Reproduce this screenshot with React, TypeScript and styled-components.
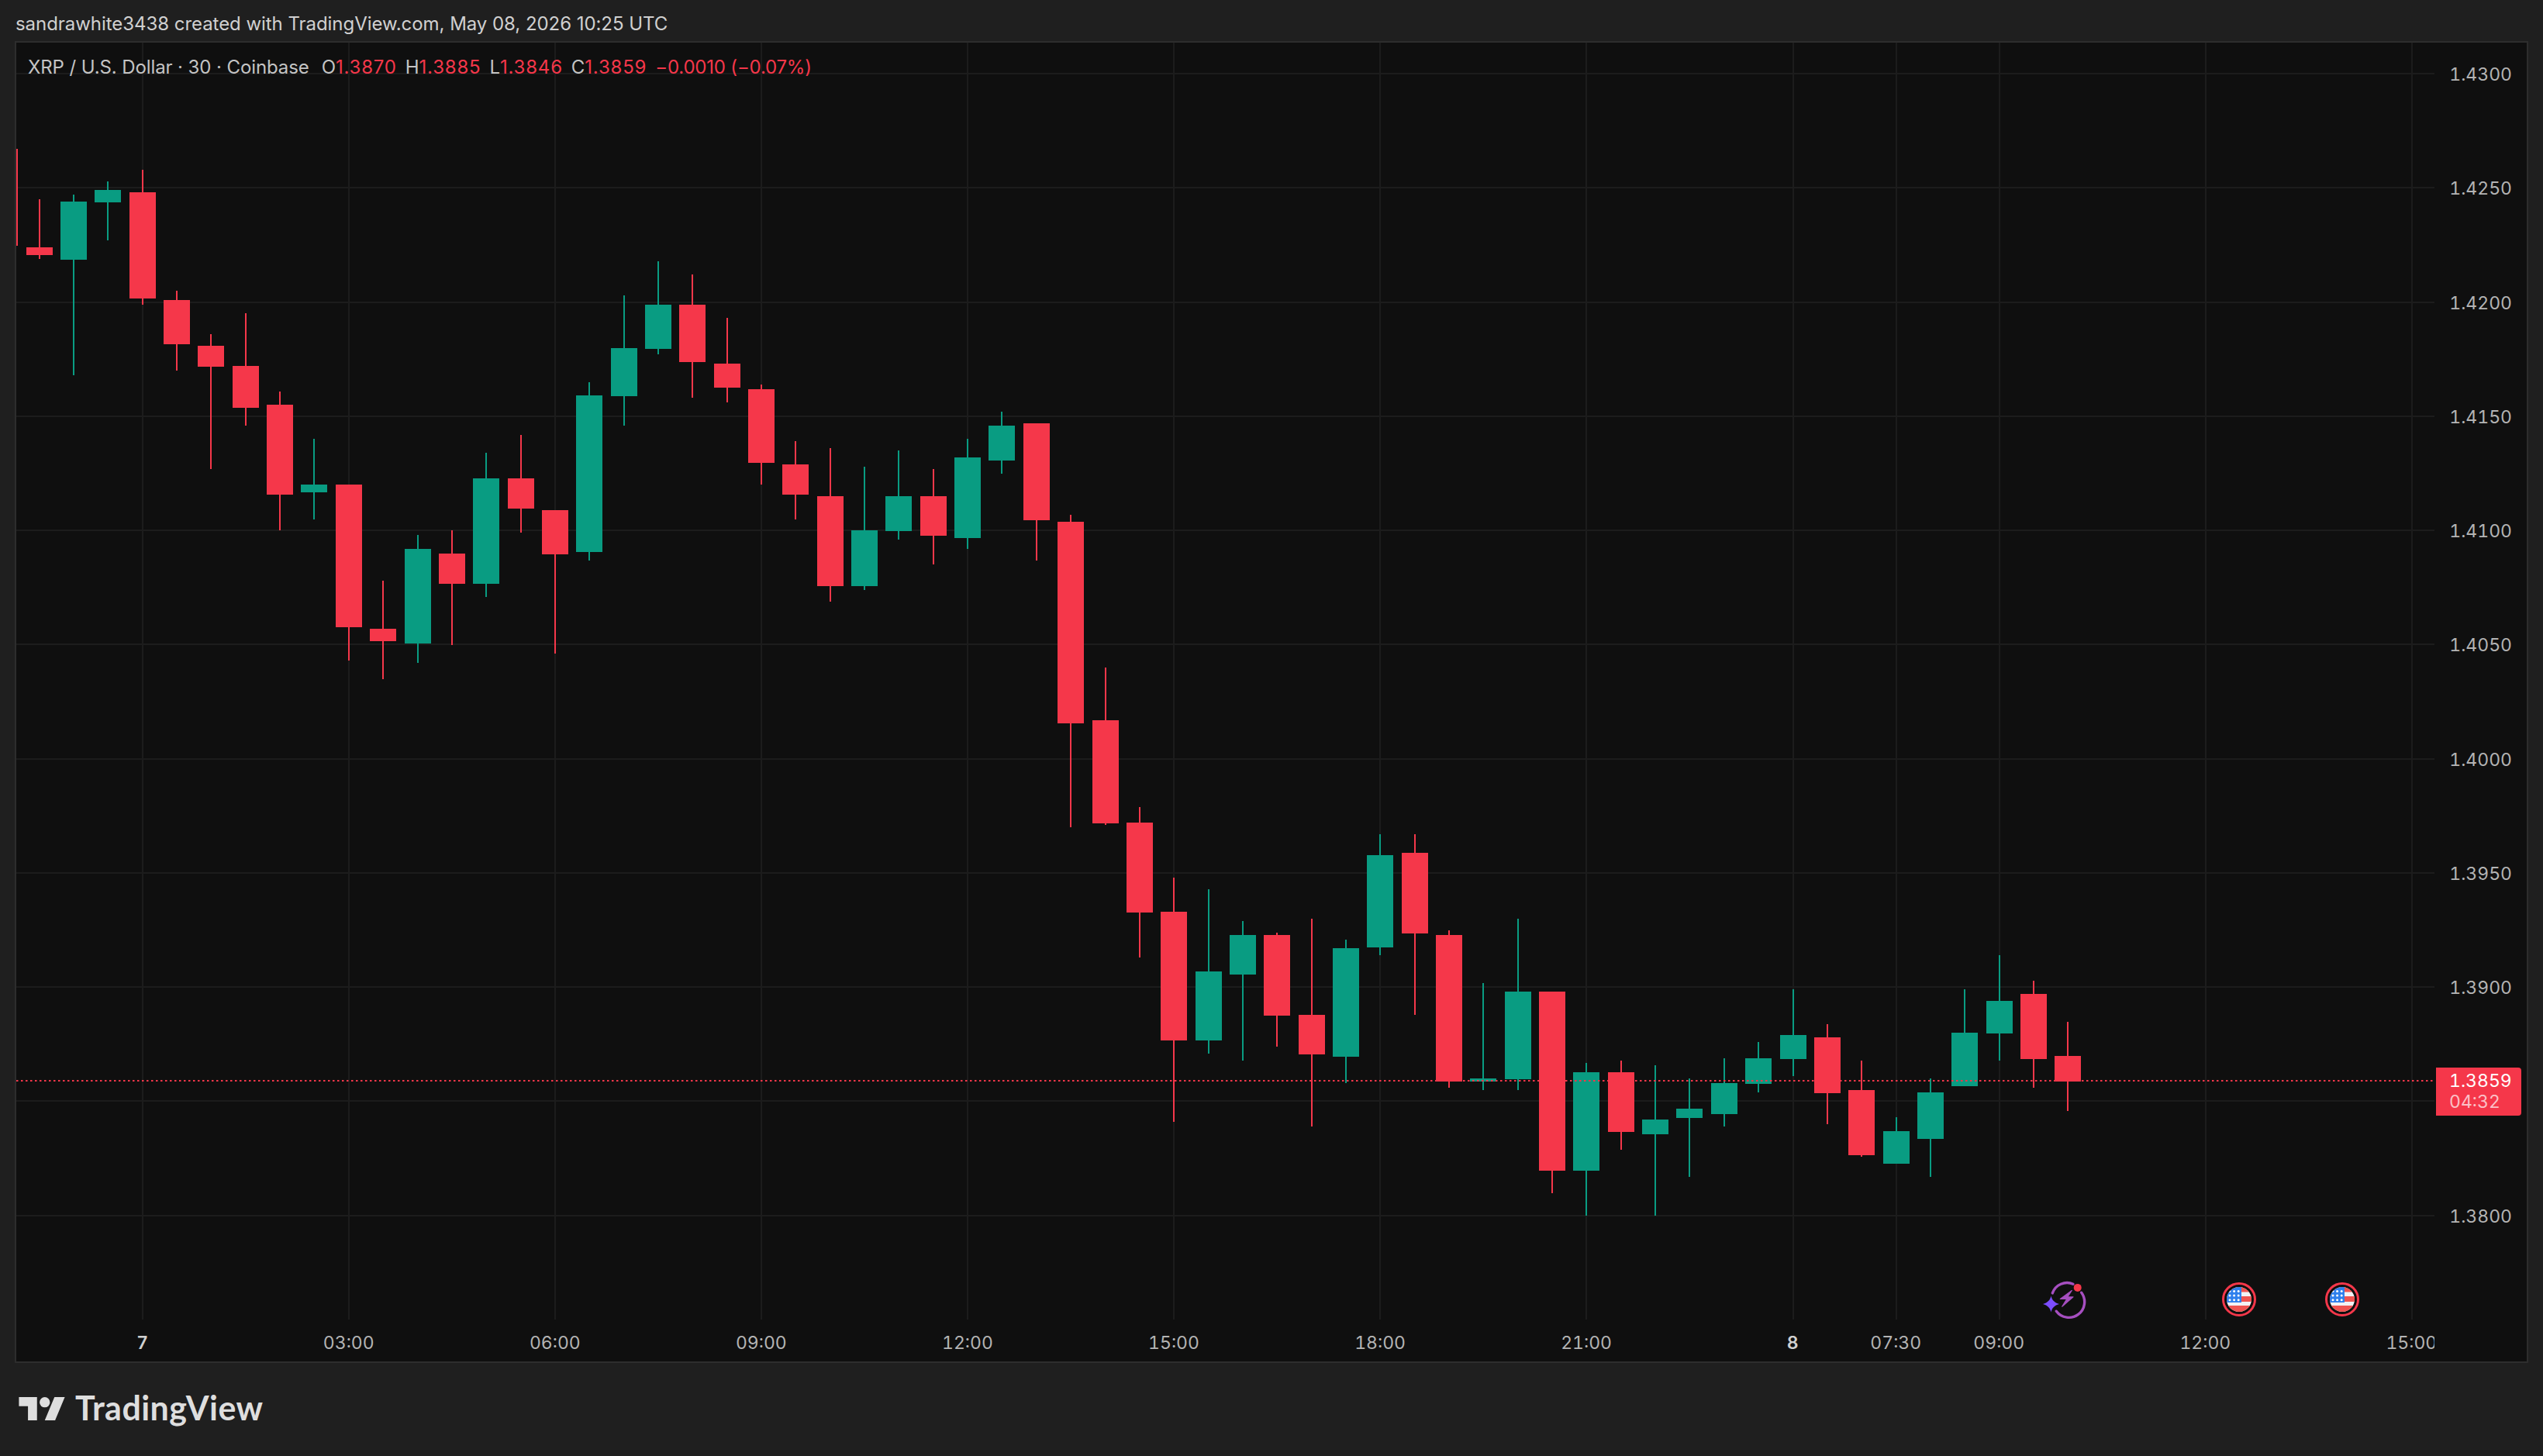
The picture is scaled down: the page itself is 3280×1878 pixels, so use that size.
import React from "react";
import styled, { createGlobalStyle } from "styled-components";

const RED = "#f5374a";
const GREEN = "#099c82";

const GlobalStyle = createGlobalStyle`
  html, body {
    margin: 0;
    padding: 0;
    background: #1f1f1f;
  }
  body {
    font-family: Inter, "Liberation Sans", sans-serif;
  }
`;

// candle data in page pixels: [index, up?, wickTop, bodyTop, bodyBottom, wickBottom]
type Candle = [number, number, number, number, number, number];
const candles: Candle[] = [
  [-4, 0, 192, 192, 317, 317],
  [-3, 0, 257, 319, 329, 334],
  [-2, 1, 251, 260, 335, 484],
  [-1, 1, 234, 245, 261, 310],
  [0, 0, 219, 248, 385, 393],
  [1, 0, 375, 387, 444, 478],
  [2, 0, 431, 446, 473, 605],
  [3, 0, 404, 472, 526, 549],
  [4, 0, 505, 522, 638, 684],
  [5, 1, 566, 625, 635, 670],
  [6, 0, 625, 625, 809, 852],
  [7, 0, 749, 811, 827, 876],
  [8, 1, 690, 708, 830, 855],
  [9, 0, 684, 714, 753, 832],
  [10, 1, 584, 617, 753, 770],
  [11, 0, 561, 617, 656, 687],
  [12, 0, 658, 658, 715, 843],
  [13, 1, 493, 510, 712, 723],
  [14, 1, 381, 449, 511, 549],
  [15, 1, 337, 393, 450, 457],
  [16, 0, 354, 393, 467, 513],
  [17, 0, 410, 469, 500, 519],
  [18, 0, 496, 502, 597, 625],
  [19, 0, 569, 599, 638, 670],
  [20, 0, 578, 640, 756, 776],
  [21, 1, 602, 684, 756, 761],
  [22, 1, 581, 640, 685, 696],
  [23, 0, 605, 640, 691, 728],
  [24, 1, 566, 590, 694, 708],
  [25, 1, 531, 549, 594, 611],
  [26, 0, 546, 546, 671, 723],
  [27, 0, 664, 673, 933, 1067],
  [28, 0, 861, 929, 1062, 1064],
  [29, 0, 1041, 1061, 1177, 1235],
  [30, 0, 1132, 1176, 1342, 1447],
  [31, 1, 1147, 1253, 1342, 1359],
  [32, 1, 1188, 1206, 1257, 1368],
  [33, 0, 1203, 1206, 1310, 1350],
  [34, 0, 1185, 1309, 1360, 1453],
  [35, 1, 1212, 1223, 1363, 1397],
  [36, 1, 1076, 1103, 1222, 1232],
  [37, 0, 1076, 1100, 1204, 1309],
  [38, 0, 1200, 1206, 1395, 1403],
  [39, 1, 1268, 1391, 1395, 1406],
  [40, 1, 1185, 1279, 1392, 1406],
  [41, 0, 1279, 1279, 1510, 1539],
  [42, 1, 1371, 1383, 1510, 1568],
  [43, 0, 1368, 1383, 1460, 1483],
  [44, 1, 1374, 1444, 1463, 1568],
  [45, 1, 1391, 1430, 1442, 1518],
  [46, 1, 1365, 1397, 1437, 1453],
  [47, 1, 1344, 1365, 1398, 1409],
  [48, 1, 1276, 1335, 1366, 1388],
  [49, 0, 1321, 1338, 1410, 1450],
  [50, 0, 1368, 1406, 1490, 1492],
  [51, 1, 1441, 1459, 1501, 1501],
  [52, 1, 1391, 1409, 1469, 1518],
  [53, 1, 1276, 1332, 1401, 1401],
  [54, 1, 1232, 1291, 1333, 1368],
  [55, 0, 1265, 1282, 1366, 1403],
  [56, 0, 1318, 1362, 1395, 1433],
];

const BAR = 44.35;
const X0 = 183.7;
const barX = (i: number) => X0 + BAR * i;

const prices = ["1.4300", "1.4250", "1.4200", "1.4150", "1.4100", "1.4050", "1.4000", "1.3950", "1.3900", "1.3800"];
const gridY = [0, 1, 2, 3, 4, 5, 6, 7, 8, 9, 10].map((k) => 95 + 147.27 * k);
const gridBars = [0, 6, 12, 18, 24, 30, 36, 42, 48, 51, 54, 60, 66];
const ticks: { bar: number; label: string; major?: boolean }[] = [
  { bar: 0, label: "7", major: true },
  { bar: 6, label: "03:00" },
  { bar: 12, label: "06:00" },
  { bar: 18, label: "09:00" },
  { bar: 24, label: "12:00" },
  { bar: 30, label: "15:00" },
  { bar: 36, label: "18:00" },
  { bar: 42, label: "21:00" },
  { bar: 48, label: "8", major: true },
  { bar: 51, label: "07:30" },
  { bar: 54, label: "09:00" },
  { bar: 60, label: "12:00" },
  { bar: 66, label: "15:00" },
];

const Page = styled.div`
  width: 3280px;
  height: 1878px;
  display: flex;
  flex-direction: column;
  background: #1f1f1f;
  overflow: hidden;
`;

const Header = styled.div`
  height: 53px;
  padding: 7px 0 0 20px;
  display: flex;
  align-items: center;
  box-sizing: border-box;
  color: #d0d0d0;
  font-size: 24px;
  letter-spacing: -0.05px;
  white-space: nowrap;
`;

const Frame = styled.div`
  margin-left: 19px;
  width: 3242px;
  height: 1705px;
  box-sizing: border-box;
  border: 2px solid #2d2d2d;
  background: #0f0f0f;
  display: grid;
  grid-template-columns: 3119px 119px;
  grid-template-rows: 1647px 54px;
  font-variant-numeric: tabular-nums;
`;

const Plot = styled.div`
  position: relative;
  overflow: hidden;
`;

const ChartSvg = styled.svg`
  display: block;
  width: 100%;
  height: 100%;
`;

const Legend = styled.div`
  position: absolute;
  left: 15px;
  top: 17px;
  display: flex;
  align-items: center;
  gap: 11px;
  color: #c4c4c4;
  font-size: 24px;
  letter-spacing: -0.1px;
  font-variant-numeric: normal;
  white-space: nowrap;
`;

const LegendTitle = styled.span`
  margin-right: 5px;
`;

const LegendItem = styled.span`
  display: inline-flex;
`;

const LegendValue = styled.span<{ $wide?: boolean }>`
  color: ${RED};
  letter-spacing: ${(p) => (p.$wide ? "0.8px" : "-0.2px")};
`;

const PriceAxis = styled.div`
  position: relative;
  padding: 26px 19px 0 0;
  display: flex;
  flex-direction: column;
  align-items: flex-end;
  gap: 117.27px;
  box-sizing: border-box;
`;

const PriceLabel = styled.div<{ $skip?: boolean }>`
  height: 30px;
  line-height: 30px;
  color: #b4b4b4;
  font-size: 23px;
  margin-top: ${(p) => (p.$skip ? "147.27px" : "0")};
`;

const PriceTag = styled.div`
  position: absolute;
  left: 2px;
  top: 1322px;
  width: 110px;
  height: 62px;
  box-sizing: border-box;
  padding: 4px 0 0 17px;
  background: ${RED};
  border-radius: 0 4px 4px 0;
  color: #fff;
  font-size: 23px;
  line-height: 27px;
`;

const TagTime = styled.div`
  color: rgba(255, 255, 255, 0.7);
`;

const TimeAxis = styled.div`
  display: grid;
  grid-template-columns: repeat(68, ${BAR}px);
  padding: 15px 0 0 118.35px;
  overflow: hidden;
  box-sizing: border-box;
  height: 54px;
`;

const TimeLabel = styled.div<{ $bar: number; $major?: boolean }>`
  grid-row: 1;
  grid-column: ${(p) => p.$bar + 1} / span 2;
  justify-self: center;
  color: ${(p) => (p.$major ? "#d0d0d0" : "#b4b4b4")};
  font-size: 23px;
  line-height: 30px;
  font-weight: ${(p) => (p.$major ? 600 : 400)};
`;

const Corner = styled.div``;

const EventMark = styled.div<{ $x: number }>`
  position: absolute;
  left: ${(p) => p.$x - 21 - 25}px;
  top: 1596px;
  width: 50px;
  height: 50px;
  svg {
    overflow: visible;
  }
`;

const Footer = styled.div`
  flex: 1;
  padding: 44px 0 0 24px;
  display: flex;
  align-items: flex-start;
  gap: 13px;
  box-sizing: border-box;
`;

const LogoMark = styled.svg`
  width: 60px;
  height: 30px;
  flex: none;
`;

const Wordmark = styled.div`
  margin-top: -12px;
  color: #dedede;
  font-family: Lato, "Open Sans", sans-serif;
  font-weight: 700;
  font-size: 43px;
  line-height: 52px;
  letter-spacing: 0.45px;
`;

const CandleShape = ({ c }: { c: Candle }) => {
  const [i, up, wT, bT, bB, wB] = c;
  const x = barX(i);
  const color = up ? GREEN : RED;
  return (
    <g fill={color}>
      <rect x={Math.round(x) - 1} y={wT} width={2} height={wB - wT} />
      <rect x={Math.round(x - 17)} y={bT} width={34} height={bB - bT} />
    </g>
  );
};

const FlagMark = ({ id }: { id: string }) => {
  const stars = [];
  for (let r = 0; r < 3; r++) {
    for (let k = 0; k < 3; k++) {
      stars.push(<circle key={`${r}${k}`} cx={13 + k * 5.6} cy={14.5 + r * 5.6} r={1.5} fill="#fff" />);
    }
  }
  return (
    <svg width="50" height="50" viewBox="0 0 50 50">
      <defs>
        <clipPath id={id}>
          <circle cx="25" cy="25" r="16" />
        </clipPath>
      </defs>
      <circle cx="25" cy="25" r="20.5" fill="#0f0f0f" stroke={RED} strokeWidth="3" />
      <g clipPath={`url(#${id})`}>
        <rect x="9" y="9" width="32" height="32" fill="#f2f2f4" />
        <rect x="9" y="9" width="32" height="6.5" fill="#ef5350" />
        <rect x="9" y="21" width="32" height="7" fill="#ef5350" />
        <rect x="9" y="33" width="32" height="8" fill="#ef5350" />
        <rect x="9" y="9" width="19" height="20" fill="#2f80ed" />
        {stars}
      </g>
    </svg>
  );
};

const BoltMark = () => (
  <svg width="50" height="50" viewBox="0 0 50 50">
    <path d="M10.3 16.9 A20 20 0 0 1 37 5.2" fill="none" stroke="#a64fc0" strokeWidth="3.4" strokeLinecap="round" />
    <path d="M47.7 16.2 A20 20 0 0 1 15.3 40.2" fill="none" stroke="#a64fc0" strokeWidth="3.4" strokeLinecap="round" />
    <path
      d="M35.3 13.5 L20.3 24.5 L28.7 24.5 L22.7 34.2 L37 21.9 L29.7 21.9 Z"
      fill="#a64fc0"
      stroke="#a64fc0"
      strokeWidth="1.2"
      strokeLinejoin="round"
    />
    <path
      d="M8.5 20.4 C9.5 25.5 13 29.4 19 30.9 C13 32.4 9.5 36.3 8.5 41.4 C7.5 36.3 4 32.4 -2 30.9 C4 29.4 7.5 25.5 8.5 20.4 Z"
      fill="#7c4dff"
    />
    <circle cx="42.7" cy="9.9" r="5" fill={RED} />
  </svg>
);

export default function App() {
  return (
    <Page>
      <GlobalStyle />
      <Header>sandrawhite3438 created with TradingView.com, May 08, 2026 10:25 UTC</Header>
      <Frame>
        <Plot>
          <ChartSvg viewBox="21 55 3119 1647" preserveAspectRatio="none">
            <g shapeRendering="crispEdges">
              {gridY.map((y) => (
                <rect key={y} x={21} y={y - 1} width={3119} height={2} fill="#1c1c1c" />
              ))}
              {gridBars.map((b) => (
                <rect key={b} x={Math.round(barX(b)) - 1} y={55} width={2} height={1647} fill="#1c1c1c" />
              ))}
              {candles.map((c) => (
                <CandleShape key={c[0]} c={c} />
              ))}
            </g>
            <line x1={21} x2={3138} y1={1394} y2={1394} stroke={RED} strokeWidth={2} strokeDasharray="2.5 3.5" />
          </ChartSvg>
          <Legend>
            <LegendTitle>XRP / U.S. Dollar · 30 · Coinbase</LegendTitle>
            <LegendItem>
              O<LegendValue $wide>1.3870</LegendValue>
            </LegendItem>
            <LegendItem>
              H<LegendValue $wide>1.3885</LegendValue>
            </LegendItem>
            <LegendItem>
              L<LegendValue $wide>1.3846</LegendValue>
            </LegendItem>
            <LegendItem>
              C<LegendValue $wide>1.3859</LegendValue>
            </LegendItem>
            <LegendValue>−0.0010 (−0.07%)</LegendValue>
          </Legend>
          <EventMark $x={2662}>
            <BoltMark />
          </EventMark>
          <EventMark $x={2888}>
            <FlagMark id="flag-a" />
          </EventMark>
          <EventMark $x={3021}>
            <FlagMark id="flag-b" />
          </EventMark>
        </Plot>
        <PriceAxis>
          {prices.map((p) => (
            <PriceLabel key={p} $skip={p === "1.3800"}>
              {p}
            </PriceLabel>
          ))}
          <PriceTag>
            1.3859
            <TagTime>04:32</TagTime>
          </PriceTag>
        </PriceAxis>
        <TimeAxis>
          {ticks.map((t) => (
            <TimeLabel key={t.bar} $bar={t.bar} $major={t.major}>
              {t.label}
            </TimeLabel>
          ))}
        </TimeAxis>
        <Corner />
      </Frame>
      <Footer>
        <LogoMark viewBox="0 4 35.5 18">
          <path fill="#dedede" d="M14 22H7V11H0V4h14v18zM28 22h-8l7.5-18h8L28 22z" />
          <circle fill="#dedede" cx="20" cy="8" r="4" />
        </LogoMark>
        <Wordmark>TradingView</Wordmark>
      </Footer>
    </Page>
  );
}
